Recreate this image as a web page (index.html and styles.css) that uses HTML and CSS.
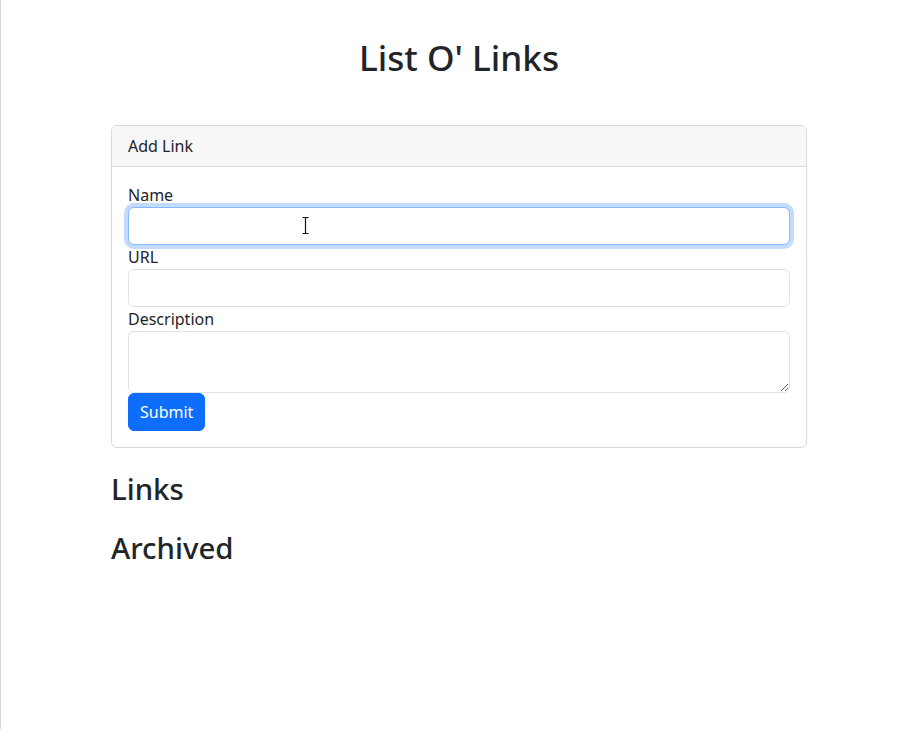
FILE: index.html
```html
<!DOCTYPE html>
<html lang="en">
<head>
<meta charset="utf-8">
<title>List O' Links</title>
<link rel="stylesheet" href="styles.css">
</head>
<body>
<main class="container">
  <h1 class="page-title">List O' Links</h1>
  <section class="card">
    <div class="card-header">Add Link</div>
    <form class="card-body">
      <label class="form-label" for="name">Name</label>
      <div class="field-wrap">
        <input class="form-control is-focused" id="name" type="text">
        <svg class="mouse-cursor" width="9" height="19" viewBox="0 0 9 19" aria-hidden="true">
          <path d="M1.5 1.5h6M4.5 1.5v16M1.5 17.5h6" fill="none" stroke="#fff" stroke-width="3" stroke-linecap="square"/>
          <path d="M1.5 1.5h6M4.5 1.5v16M1.5 17.5h6" fill="none" stroke="#111" stroke-width="1.2"/>
        </svg>
      </div>
      <label class="form-label" for="url">URL</label>
      <input class="form-control" id="url" type="text">
      <label class="form-label" for="desc">Description</label>
      <textarea class="form-control" id="desc" rows="2"></textarea>
      <div><button class="btn-primary" type="button">Submit</button></div>
    </form>
  </section>
  <h2 class="section-title">Links</h2>
  <ul class="link-list"></ul>
  <h2 class="section-title">Archived</h2>
  <ul class="link-list"></ul>
</main>
</body>
</html>
```
FILE: styles.css
```css
* { box-sizing: border-box; }
html, body { margin: 0; height: 100%; }
body {
  background: #fff;
  color: #212529;
  font-family: "Noto Sans", "Open Sans", sans-serif;
  font-size: 16px;
  line-height: 1.5;
  border-left: 1px solid #d6d9d6;
  padding-left: 2px;
}
.container {
  width: 696px;
  margin: 0 auto;
}
.page-title {
  text-align: center;
  font-size: 35.2px;
  font-weight: 500;
  line-height: 1.2;
  margin: 36px 0 47px;
}
.card {
  border: 1px solid #d9d9d9;
  border-radius: 6px;
  margin-bottom: 24px;
  overflow: hidden;
}
.card-header {
  background: #f7f7f7;
  padding: 8px 16px;
  border-bottom: 1px solid #d9d9d9;
}
.card-body {
  padding: 16px;
  display: flex;
  flex-direction: column;
  margin: 0;
}
.form-label { display: block; }
.field-wrap { position: relative; }
.form-control {
  display: block;
  width: 100%;
  font: inherit;
  color: #212529;
  padding: 6px 12px;
  border: 1px solid #dee2e6;
  border-radius: 6px;
  background: #fff;
  height: 38px;
  outline: none;
}
textarea.form-control { height: 62px; resize: vertical; }
.is-focused {
  border-color: #86b7fe;
  box-shadow: 0 0 0 4px rgba(13,110,253,.25);
}
.mouse-cursor {
  position: absolute;
  left: 173px;
  top: 9px;
}
.btn-primary {
  font: inherit;
  color: #fff;
  background: #0d6efd;
  border: 1px solid #0d6efd;
  border-radius: 6px;
  padding: 6px 11px;
  height: 38px;
  cursor: pointer;
}
.section-title {
  font-size: 29.4px;
  font-weight: 500;
  line-height: 1.2;
  margin: 0 0 8px;
}
.link-list {
  display: flow-root;
  margin: 0 0 15px;
  padding: 0;
  list-style: none;
}
```
